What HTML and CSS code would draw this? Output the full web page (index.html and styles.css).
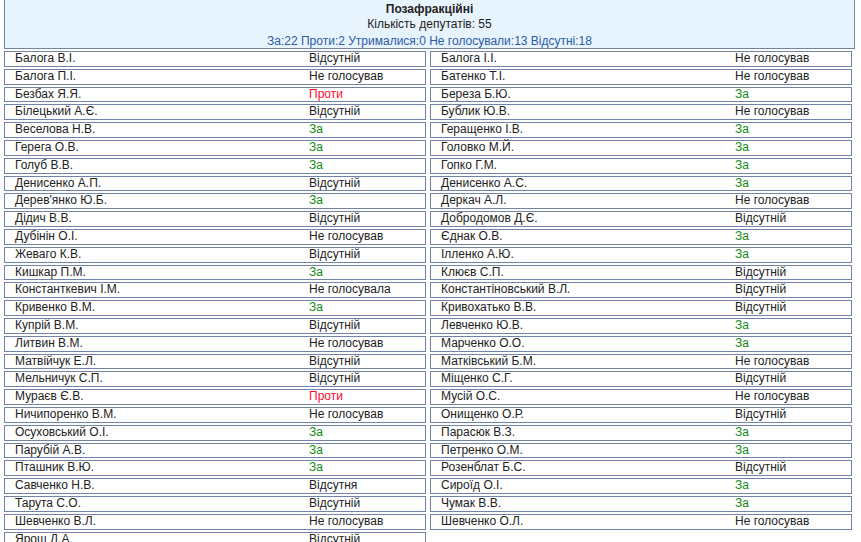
FILE: index.html
```html
<!DOCTYPE html>
<html lang="uk">
<head>
<meta charset="utf-8">
<title>Позафракційні</title>
<link rel="stylesheet" href="styles.css">
</head>
<body>
<div class="page">
  <div class="head">
    <div class="title">Позафракційні</div>
    <div class="count">Кількість депутатів: 55</div>
    <div class="summary">За:22 Проти:2 Утрималися:0 Не голосували:13 Відсутні:18</div>
  </div>
  <div class="list">
    <div class="row"><span class="name">Балога В.І.</span><span class="vote">Відсутній</span></div>
    <div class="row"><span class="name">Балога І.І.</span><span class="vote">Не голосував</span></div>
    <div class="row"><span class="name">Балога П.І.</span><span class="vote">Не голосував</span></div>
    <div class="row"><span class="name">Батенко Т.І.</span><span class="vote">Не голосував</span></div>
    <div class="row"><span class="name">Безбах Я.Я.</span><span class="vote against">Проти</span></div>
    <div class="row"><span class="name">Береза Б.Ю.</span><span class="vote for">За</span></div>
    <div class="row"><span class="name">Білецький А.Є.</span><span class="vote">Відсутній</span></div>
    <div class="row"><span class="name">Бублик Ю.В.</span><span class="vote">Не голосував</span></div>
    <div class="row"><span class="name">Веселова Н.В.</span><span class="vote for">За</span></div>
    <div class="row"><span class="name">Геращенко І.В.</span><span class="vote for">За</span></div>
    <div class="row"><span class="name">Герега О.В.</span><span class="vote for">За</span></div>
    <div class="row"><span class="name">Головко М.Й.</span><span class="vote for">За</span></div>
    <div class="row"><span class="name">Голуб В.В.</span><span class="vote for">За</span></div>
    <div class="row"><span class="name">Гопко Г.М.</span><span class="vote for">За</span></div>
    <div class="row"><span class="name">Денисенко А.П.</span><span class="vote">Відсутній</span></div>
    <div class="row"><span class="name">Денисенко А.С.</span><span class="vote for">За</span></div>
    <div class="row"><span class="name">Дерев'янко Ю.Б.</span><span class="vote for">За</span></div>
    <div class="row"><span class="name">Деркач А.Л.</span><span class="vote">Не голосував</span></div>
    <div class="row"><span class="name">Дідич В.В.</span><span class="vote">Відсутній</span></div>
    <div class="row"><span class="name">Добродомов Д.Є.</span><span class="vote">Відсутній</span></div>
    <div class="row"><span class="name">Дубінін О.І.</span><span class="vote">Не голосував</span></div>
    <div class="row"><span class="name">Єднак О.В.</span><span class="vote for">За</span></div>
    <div class="row"><span class="name">Жеваго К.В.</span><span class="vote">Відсутній</span></div>
    <div class="row"><span class="name">Ілленко А.Ю.</span><span class="vote for">За</span></div>
    <div class="row"><span class="name">Кишкар П.М.</span><span class="vote for">За</span></div>
    <div class="row"><span class="name">Клюєв С.П.</span><span class="vote">Відсутній</span></div>
    <div class="row"><span class="name">Константкевич І.М.</span><span class="vote">Не голосувала</span></div>
    <div class="row"><span class="name">Константіновський В.Л.</span><span class="vote">Відсутній</span></div>
    <div class="row"><span class="name">Кривенко В.М.</span><span class="vote for">За</span></div>
    <div class="row"><span class="name">Кривохатько В.В.</span><span class="vote">Відсутній</span></div>
    <div class="row"><span class="name">Купрій В.М.</span><span class="vote">Відсутній</span></div>
    <div class="row"><span class="name">Левченко Ю.В.</span><span class="vote for">За</span></div>
    <div class="row"><span class="name">Литвин В.М.</span><span class="vote">Не голосував</span></div>
    <div class="row"><span class="name">Марченко О.О.</span><span class="vote for">За</span></div>
    <div class="row"><span class="name">Матвійчук Е.Л.</span><span class="vote">Відсутній</span></div>
    <div class="row"><span class="name">Матківський Б.М.</span><span class="vote">Не голосував</span></div>
    <div class="row"><span class="name">Мельничук С.П.</span><span class="vote">Відсутній</span></div>
    <div class="row"><span class="name">Міщенко С.Г.</span><span class="vote">Відсутній</span></div>
    <div class="row"><span class="name">Мураєв Є.В.</span><span class="vote against">Проти</span></div>
    <div class="row"><span class="name">Мусій О.С.</span><span class="vote">Не голосував</span></div>
    <div class="row"><span class="name">Ничипоренко В.М.</span><span class="vote">Не голосував</span></div>
    <div class="row"><span class="name">Онищенко О.Р.</span><span class="vote">Відсутній</span></div>
    <div class="row"><span class="name">Осуховський О.І.</span><span class="vote for">За</span></div>
    <div class="row"><span class="name">Парасюк В.З.</span><span class="vote for">За</span></div>
    <div class="row"><span class="name">Парубій А.В.</span><span class="vote for">За</span></div>
    <div class="row"><span class="name">Петренко О.М.</span><span class="vote for">За</span></div>
    <div class="row"><span class="name">Пташник В.Ю.</span><span class="vote for">За</span></div>
    <div class="row"><span class="name">Розенблат Б.С.</span><span class="vote">Відсутній</span></div>
    <div class="row"><span class="name">Савченко Н.В.</span><span class="vote">Відсутня</span></div>
    <div class="row"><span class="name">Сироїд О.І.</span><span class="vote for">За</span></div>
    <div class="row"><span class="name">Тарута С.О.</span><span class="vote">Відсутній</span></div>
    <div class="row"><span class="name">Чумак В.В.</span><span class="vote for">За</span></div>
    <div class="row"><span class="name">Шевченко В.Л.</span><span class="vote">Не голосував</span></div>
    <div class="row"><span class="name">Шевченко О.Л.</span><span class="vote">Не голосував</span></div>
    <div class="row"><span class="name">Ярош Д.А.</span><span class="vote">Відсутній</span></div>
  </div>
</div>
</body>
</html>
```

FILE: styles.css
```css
html, body {
  margin: 0;
  padding: 0;
  background: #ffffff;
}

body {
  font-family: "Liberation Sans", Arial, sans-serif;
  font-size: 12px;
  color: #222222;
}

.page {
  padding-left: 4px;
  width: 851px;
}

.head {
  box-sizing: border-box;
  width: 851px;
  height: 49px;
  background: #e8f4fd;
  border: 1px solid #7282a8;
  border-top: none;
  text-align: center;
  padding-top: 2px;
}

.title {
  font-weight: bold;
  line-height: 15px;
  color: #222222;
}

.count {
  line-height: 15px;
  color: #222222;
}

.summary {
  line-height: 15px;
  margin-top: 2px;
  color: #2d5aa6;
}

.list {
  width: 848px;
  margin-top: 2px;
  display: grid;
  grid-template-columns: 1fr 1fr;
  column-gap: 4px;
  row-gap: 2px;
}

.row {
  display: grid;
  grid-template-columns: 294px 1fr;
  border: 1px solid #7282a8;
  line-height: 13.8px;
  white-space: nowrap;
}

.name,
.vote {
  padding-left: 10px;
}

.vote.for {
  color: #0f8a0f;
}

.vote.against {
  color: #ff0a2f;
}
```
